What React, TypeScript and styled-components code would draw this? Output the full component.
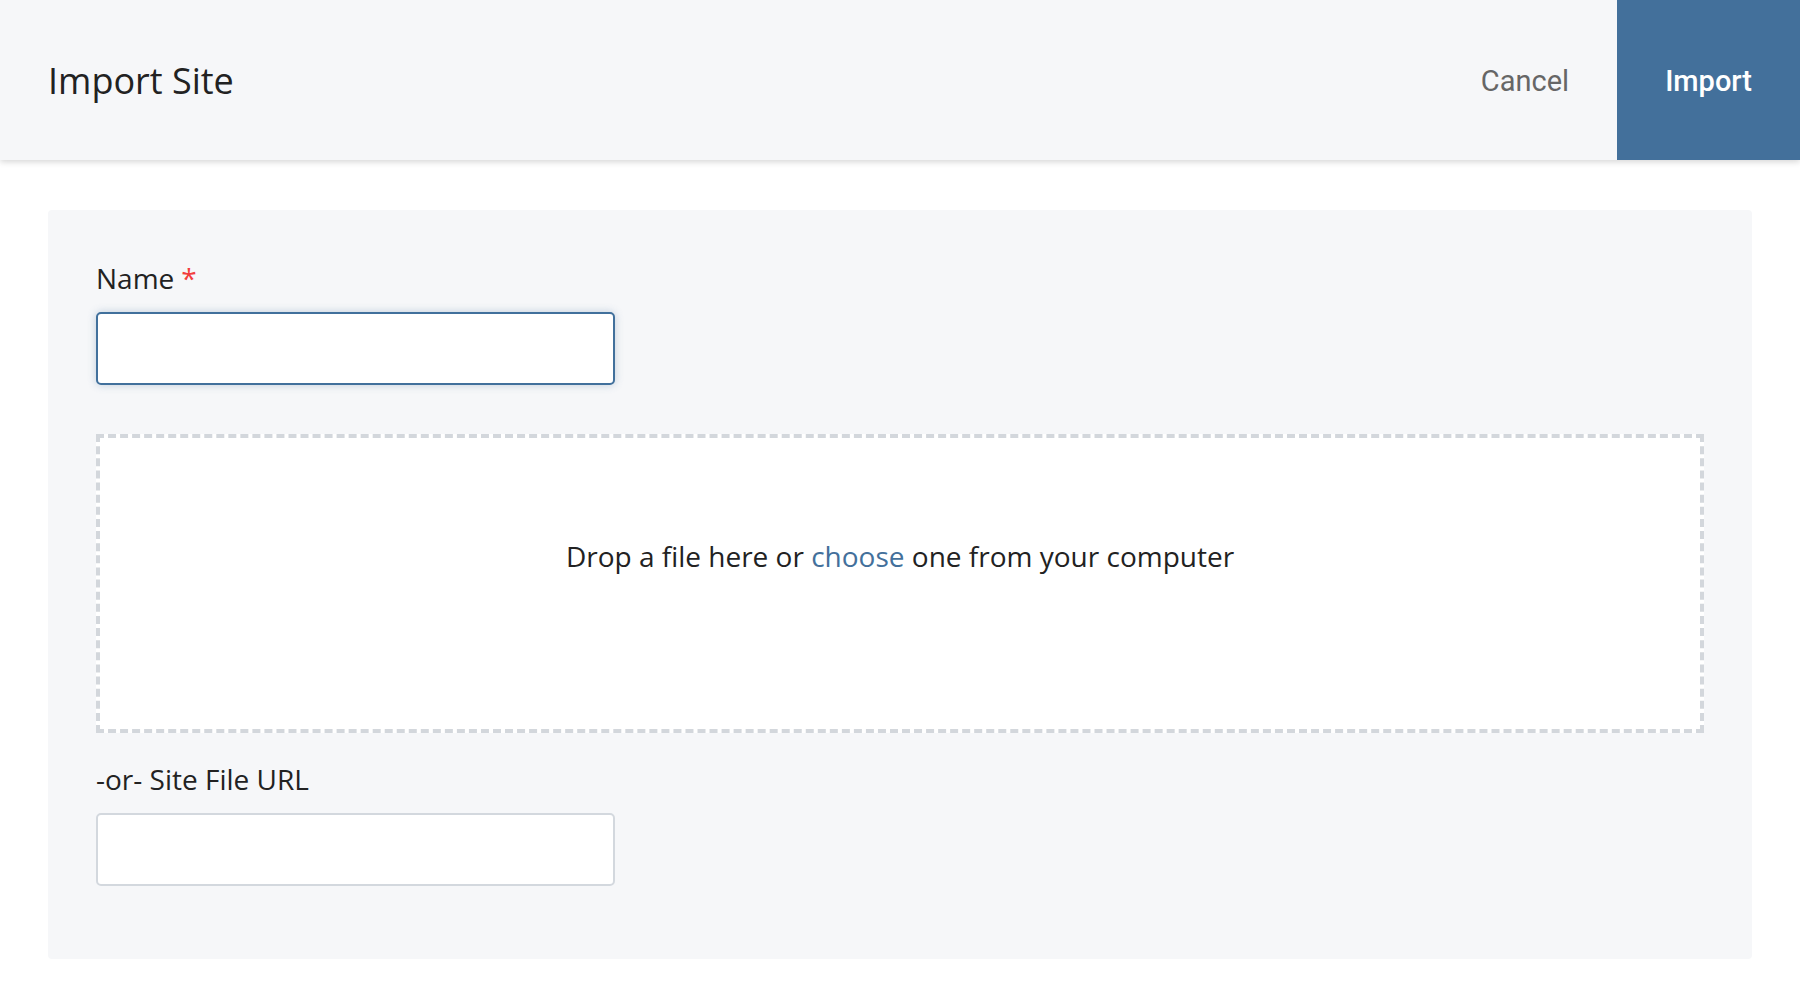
import React from 'react';
import styled, { createGlobalStyle } from 'styled-components';

const GlobalStyle = createGlobalStyle`
  body {
    margin: 0;
    background: #ffffff;
    font-family: "Open Sans", "Noto Sans", sans-serif;
    color: #222222;
  }
`;

export default function App() {
  return (
    <>
      <GlobalStyle />
      <Header>
        <Title>Import Site</Title>
        <HeaderButton type="button">Cancel</HeaderButton>
        <HeaderButton type="button" $primary>Import</HeaderButton>
      </Header>
      <Main>
        <Panel>
          <Field>
            <Label>
              Name<Required>*</Required>
            </Label>
            <TextInput type="text" $focused />
          </Field>
          <DropZone>
            Drop a file here or <Choose>choose</Choose> one from your computer
          </DropZone>
          <Field $gap={26}>
            <Label>-or- Site File URL</Label>
            <TextInput type="text" />
          </Field>
        </Panel>
      </Main>
    </>
  );
}

const Header = styled.header`
  position: relative;
  z-index: 1;
  display: flex;
  align-items: center;
  height: 160px;
  background: #f6f7f9;
  box-shadow: 0 2px 6px rgba(0, 0, 0, 0.16);
`;

const Title = styled.h1`
  flex: 1;
  margin: 0;
  padding-left: 48px;
  font-size: 36px;
  font-weight: 400;
  color: #222222;
`;

const HeaderButton = styled.button<{ $primary?: boolean }>`
  height: 100%;
  padding: 2px 48px 0;
  border: none;
  font-family: Roboto, "Liberation Sans", sans-serif;
  font-size: 29px;
  font-weight: ${(p) => (p.$primary ? 500 : 400)};
  background: ${(p) => (p.$primary ? '#43709b' : 'transparent')};
  color: ${(p) => (p.$primary ? '#ffffff' : '#666666')};
  cursor: pointer;
`;

const Main = styled.main`
  padding: 50px 48px 0;
`;

const Panel = styled.section`
  padding: 48px 48px 73px;
  background: #f6f7f9;
  border-radius: 4px;
`;

const Field = styled.div<{ $gap?: number }>`
  display: flex;
  flex-direction: column;
  align-items: flex-start;
  margin-top: ${(p) => p.$gap ?? 0}px;
`;

const Label = styled.label`
  margin-bottom: 14px;
  font-size: 28px;
  line-height: 40px;
  color: #222222;
`;

const Required = styled.span`
  margin-left: 7px;
  color: #f23d3d;
`;

const TextInput = styled.input<{ $focused?: boolean }>`
  box-sizing: border-box;
  width: 519px;
  height: 73px;
  padding: 0 16px;
  background: #ffffff;
  border: 2px solid ${(p) => (p.$focused ? '#41709c' : '#d3d8de')};
  border-radius: 5px;
  box-shadow: ${(p) => (p.$focused ? '0 0 8px rgba(65, 112, 156, 0.3)' : 'none')};
  font-family: inherit;
  font-size: 28px;
  outline: none;
`;

const DropZone = styled.div`
  box-sizing: border-box;
  height: 299px;
  margin-top: 49px;
  padding-top: 98px;
  background: #ffffff;
  border: 4px dashed #d3d7dc;
  text-align: center;
  font-size: 28px;
  line-height: 40px;
  color: #222222;
`;

const Choose = styled.a`
  color: #43709b;
  cursor: pointer;
`;
